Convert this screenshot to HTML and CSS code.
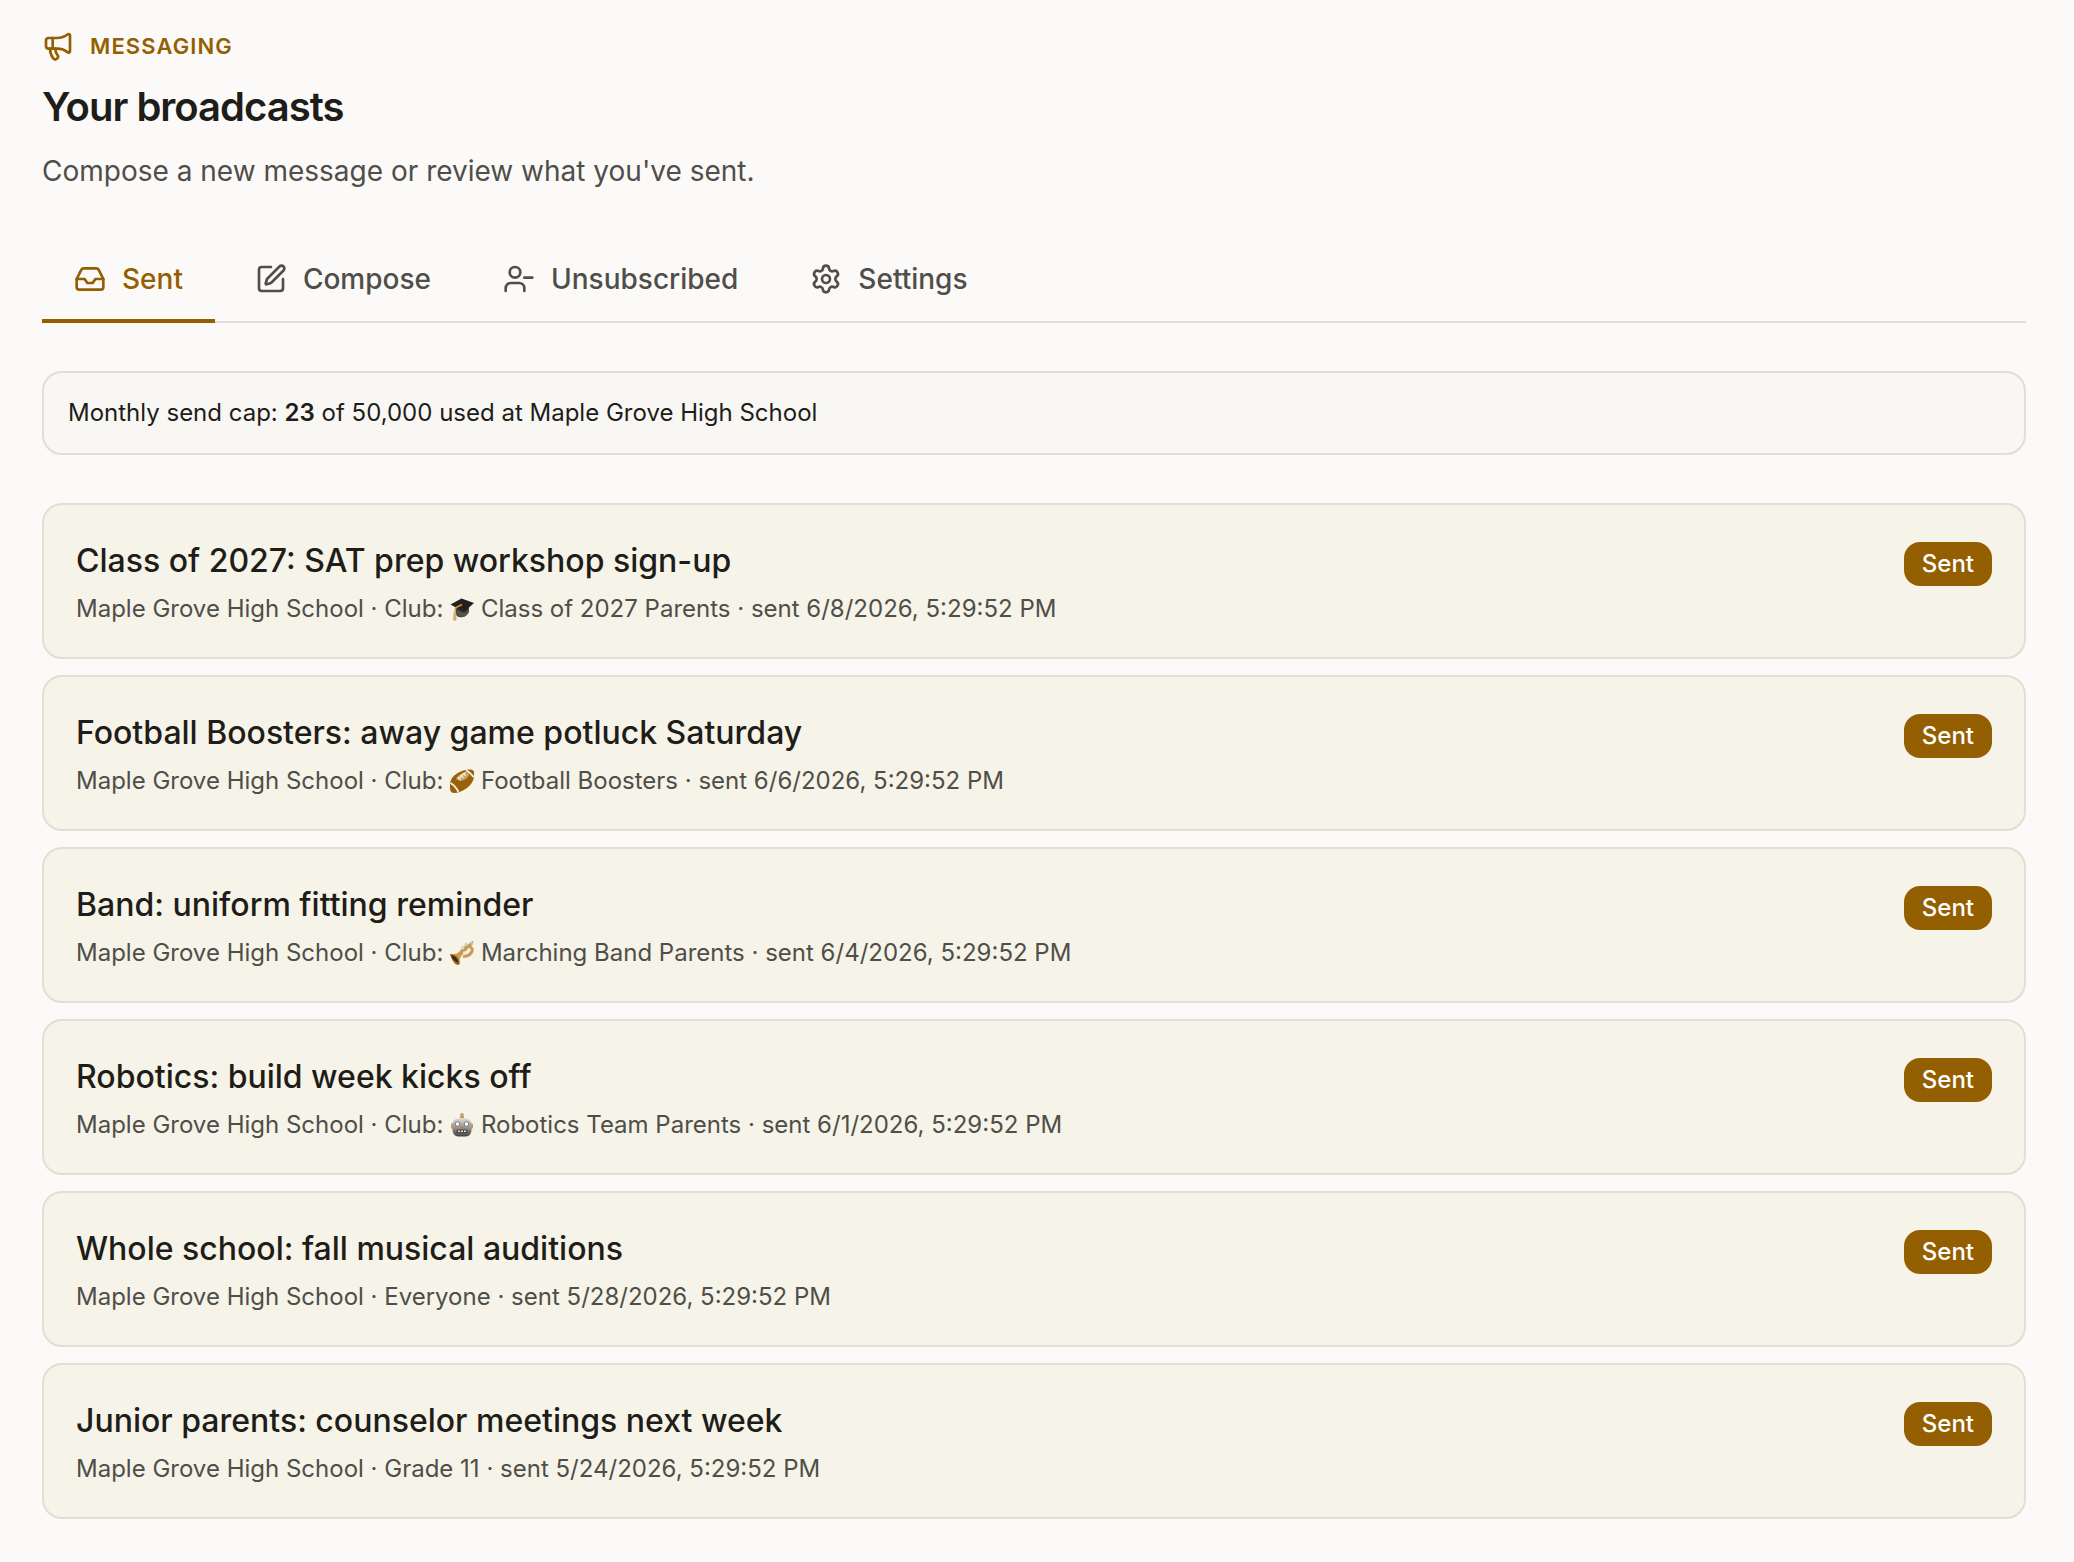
FILE: index.html
```html
<!DOCTYPE html>
<html lang="en">
<head>
  <meta charset="UTF-8" />
  <meta name="viewport" content="width=device-width, initial-scale=1.0" />
  <title>Your broadcasts</title>
  <link rel="stylesheet" href="styles.css">
</head>
<body>

  <!-- emoji artwork, reused in the list -->
  <svg class="sprite" aria-hidden="true">
    <symbol id="grad-cap" viewBox="0 0 24 24">
      <path d="M6 11v6q1 4 7 3 5-2 6-6v-5z" fill="#3b3a38"/>
      <path d="M0.500 7.500 11.500 1.500 24 6 14 15z" fill="#222120"/>
      <path d="M7 13q4 3 7 3 3-1 5-4v3q-2 4-5 5-5 0-7-3z" fill="#55534f"/>
      <path d="M12 7.500 6 10.500 5 14" fill="none" stroke="#d8952f" stroke-width="1.600"/>
      <path d="M4 13h2l.5 10q-2 1.500-3.500 0z" fill="#d6b06b"/>
    </symbol>
    <symbol id="football" viewBox="0 0 24 24">
      <path d="M0 19Q-1 9 7 4.500 14 0 21 .5 25 1 24 6q0 8-7 13T4 24q-4 0-4-5z" fill="#9a6208"/>
      <path d="M6 9q6-7 14-6-1 7-9 9-4 0-5-3z" fill="#c2a066"/>
      <path d="M16 1q5 3 7.500 7M.5 14q5 3 8 9" fill="none" stroke="#f2eee5" stroke-width="2"/>
      <path d="M8 10l8-7M8 8l3 3M10.500 6l3 3M13 4l3 3" stroke="#f5ecd8" stroke-width="1.200"/>
    </symbol>
    <symbol id="trumpet" viewBox="0 0 24 24">
      <path d="M0 13q6 1 10-3L21 1l2 2-9 9q-5 4-5 11l-2 1q-3-1-4-4t-3-7z" fill="#c79b50"/>
      <path d="M0 13q5 0 8 4t1 7Q5 23 3 20t-3-7z" fill="#9c6714"/>
      <path d="M1 14q6 1 7.500 8Q3 20 1 14z" fill="#33291c"/>
      <path d="M11 11q5-7 9-5t1 6-8 3" fill="none" stroke="#c79b50" stroke-width="3"/>
      <circle cx="12.500" cy="6.500" r="1.900" fill="#dedad2"/>
      <circle cx="16" cy="3.500" r="1.700" fill="#d0ccc4"/>
      <circle cx="14.500" cy="12" r="1.700" fill="#ece8e0"/>
      <circle cx="19" cy="8.500" r="1.600" fill="#ece8e0"/>
      <path d="M20.500 3l3-3" stroke="#bdb9b2" stroke-width="2"/>
    </symbol>
    <symbol id="robot" viewBox="0 0 24 24">
      <linearGradient id="metal" x1="0" y1="0" x2="0" y2="1">
        <stop offset="0" stop-color="#e0deda"/>
        <stop offset=".5" stop-color="#9a9894"/>
        <stop offset="1" stop-color="#45433f"/>
      </linearGradient>
      <path d="M12 1v5" stroke="#8b8984" stroke-width="2"/>
      <circle cx="12" cy="1.800" r="1.800" fill="#a7a29b"/>
      <path d="M10 3h4v3h-4z" fill="#d89a3a"/>
      <rect x="1" y="10" width="22" height="6" rx="2" fill="#cf9640"/>
      <path d="M2.500 10q1-5 9.500-5t9.500 5v8q-1 5-5.500 5.500H8q-4.500-.5-5.500-5.500z" fill="url(#metal)"/>
      <circle cx="7.500" cy="11" r="2.300" fill="#fff" stroke="#777" stroke-width="1"/>
      <circle cx="16.500" cy="11" r="2.300" fill="#fff" stroke="#777" stroke-width="1"/>
      <path d="M11 13.500h2l.5 2h-3z" fill="#b98228"/>
      <rect x="6.500" y="16.500" width="11" height="3.500" rx="1" fill="#4b4945"/>
      <path d="M8 18.300h2m1 0h2m1 0h2" stroke="#ddd" stroke-width="1.400"/>
    </symbol>
  </svg>

  <main class="page">
    <header class="page-header">
      <div class="eyebrow">
        <svg class="icon" viewBox="0 0 24 24" aria-hidden="true"><path d="M11 6a13 13 0 0 0 8.400-2.800A1 1 0 0 1 21 4v12a1 1 0 0 1-1.600.8A13 13 0 0 0 11 14H5a2 2 0 0 1-2-2V8a2 2 0 0 1 2-2z"/><path d="M6 14a12 12 0 0 0 2.400 7.200 2 2 0 0 0 3.200-2.400A8 8 0 0 1 10 14"/><path d="M8 6v8"/></svg>
        <span>Messaging</span>
      </div>
      <h1>Your broadcasts</h1>
      <p>Compose a new message or review what you've sent.</p>
    </header>

    <nav class="tabs">
      <a class="tab active" href="#sent" aria-current="page">
        <svg class="icon" viewBox="0 0 24 24" aria-hidden="true"><path d="M22 12h-6l-2 3h-4l-2-3H2"/><path d="M5.450 5.110 2 12v6a2 2 0 0 0 2 2h16a2 2 0 0 0 2-2v-6l-3.450-6.890A2 2 0 0 0 16.760 4H7.240a2 2 0 0 0-1.790 1.110z"/></svg>
        Sent
      </a>
      <a class="tab" href="#compose">
        <svg class="icon" viewBox="0 0 24 24" aria-hidden="true"><path d="M12 3H5a2 2 0 0 0-2 2v14a2 2 0 0 0 2 2h14a2 2 0 0 0 2-2v-7"/><path d="M18.375 2.625a1 1 0 0 1 3 3l-9.013 9.014a2 2 0 0 1-.853.505l-2.873.840a.5.5 0 0 1-.620-.620l.840-2.873a2 2 0 0 1 .506-.852z"/></svg>
        Compose
      </a>
      <a class="tab" href="#unsubscribed">
        <svg class="icon" viewBox="0 0 24 24" aria-hidden="true"><path d="M16 21v-2a4 4 0 0 0-4-4H6a4 4 0 0 0-4 4v2"/><circle cx="9" cy="7" r="4"/><path d="M22 11h-6"/></svg>
        Unsubscribed
      </a>
      <a class="tab" href="#settings">
        <svg class="icon" viewBox="0 0 24 24" aria-hidden="true"><path d="M9.671 4.136a2.340 2.340 0 0 1 4.659 0 2.340 2.340 0 0 0 3.319 1.915 2.340 2.340 0 0 1 2.330 4.033 2.340 2.340 0 0 0 0 3.831 2.340 2.340 0 0 1-2.330 4.033 2.340 2.340 0 0 0-3.319 1.915 2.340 2.340 0 0 1-4.659 0 2.340 2.340 0 0 0-3.320-1.915 2.340 2.340 0 0 1-2.330-4.033 2.340 2.340 0 0 0 0-3.831A2.340 2.340 0 0 1 6.350 6.051a2.340 2.340 0 0 0 3.319-1.915"/><circle cx="12" cy="12" r="3"/></svg>
        Settings
      </a>
    </nav>

    <div class="cap">Monthly send cap: <strong>23</strong> of 50,000 used at Maple Grove High School</div>

    <ul class="broadcasts">
      <li class="card">
        <div>
          <h2>Class of 2027: SAT prep workshop sign-up</h2>
          <p>Maple Grove High School · Club: <svg class="emoji" role="img" aria-label="Graduation cap"><use href="#grad-cap"/></svg> Class of 2027 Parents · sent 6/8/2026, 5:29:52 PM</p>
        </div>
        <span class="badge">Sent</span>
      </li>
      <li class="card">
        <div>
          <h2>Football Boosters: away game potluck Saturday</h2>
          <p>Maple Grove High School · Club: <svg class="emoji" role="img" aria-label="Football"><use href="#football"/></svg> Football Boosters · sent 6/6/2026, 5:29:52 PM</p>
        </div>
        <span class="badge">Sent</span>
      </li>
      <li class="card">
        <div>
          <h2>Band: uniform fitting reminder</h2>
          <p>Maple Grove High School · Club: <svg class="emoji" role="img" aria-label="Trumpet"><use href="#trumpet"/></svg> Marching Band Parents · sent 6/4/2026, 5:29:52 PM</p>
        </div>
        <span class="badge">Sent</span>
      </li>
      <li class="card">
        <div>
          <h2>Robotics: build week kicks off</h2>
          <p>Maple Grove High School · Club: <svg class="emoji" role="img" aria-label="Robot"><use href="#robot"/></svg> Robotics Team Parents · sent 6/1/2026, 5:29:52 PM</p>
        </div>
        <span class="badge">Sent</span>
      </li>
      <li class="card">
        <div>
          <h2>Whole school: fall musical auditions</h2>
          <p>Maple Grove High School · Everyone · sent 5/28/2026, 5:29:52 PM</p>
        </div>
        <span class="badge">Sent</span>
      </li>
      <li class="card">
        <div>
          <h2>Junior parents: counselor meetings next week</h2>
          <p>Maple Grove High School · Grade 11 · sent 5/24/2026, 5:29:52 PM</p>
        </div>
        <span class="badge">Sent</span>
      </li>
    </ul>
  </main>

</body>
</html>
```
FILE: styles.css
```css
* {
  box-sizing: border-box;
}

body {
  margin: 0;
  background: #fbfaf8;
  color: #1e1d19;
  font-family: Inter, sans-serif;
  font-size: 24px;
}

h1, h2, p, ul {
  margin: 0;
  padding: 0;
}

.sprite {
  position: absolute;
  width: 0;
  height: 0;
}

.page {
  padding: 30px 48px 43px 42px;
}

.icon {
  width: 32px;
  height: 32px;
  flex-shrink: 0;
  fill: none;
  stroke: currentColor;
  stroke-width: 2;
  stroke-linecap: round;
  stroke-linejoin: round;
}

.eyebrow {
  display: flex;
  align-items: center;
  gap: 16px;
  color: #945f00;
  font-size: 22px;
  font-weight: 600;
  line-height: 32px;
  letter-spacing: 0.05em;
  text-transform: uppercase;
}

.page-header h1 {
  margin-top: 16px;
  font-size: 40px;
  font-weight: 600;
  line-height: 57px;
  letter-spacing: -0.025em;
}

.page-header p {
  margin-top: 16px;
  color: #4f4e48;
  font-size: 28px;
  line-height: 40px;
}

.tabs {
  display: flex;
  gap: 8px;
  margin-top: 48px;
  border-bottom: 2px solid #e3ddd5;
}

.tab {
  display: flex;
  align-items: center;
  gap: 16px;
  margin-bottom: -2px;
  padding: 24px 32px;
  border-bottom: 4px solid transparent;
  color: #4f4e48;
  font-size: 28px;
  font-weight: 500;
  line-height: 32px;
  text-decoration: none;
}

.tab.active {
  border-bottom-color: #945f00;
  color: #945f00;
}

.cap {
  margin-top: 48px;
  padding: 22px 24px;
  border: 2px solid #e3ddd5;
  border-radius: 20px;
  background: #f8f7f4;
  line-height: 36px;
}

.cap strong {
  font-weight: 600;
}

.broadcasts {
  display: flex;
  flex-direction: column;
  gap: 16px;
  margin-top: 48px;
  list-style: none;
}

.card {
  display: flex;
  justify-content: space-between;
  align-items: flex-start;
  gap: 32px;
  padding: 32px;
  border: 2px solid #e2ded5;
  border-radius: 20px;
  background: #f6f3e8;
}

.card h2 {
  font-size: 32px;
  font-weight: 500;
  line-height: 48px;
}

.card p {
  margin-top: 8px;
  color: #4f4e48;
  line-height: 32px;
}

.emoji {
  width: 24px;
  height: 24px;
  vertical-align: -4px;
}

.badge {
  margin-top: 5px;
  padding: 4px 18px;
  border-radius: 16px;
  background: #945f00;
  color: #fff;
  font-weight: 500;
  line-height: 36px;
}
```
